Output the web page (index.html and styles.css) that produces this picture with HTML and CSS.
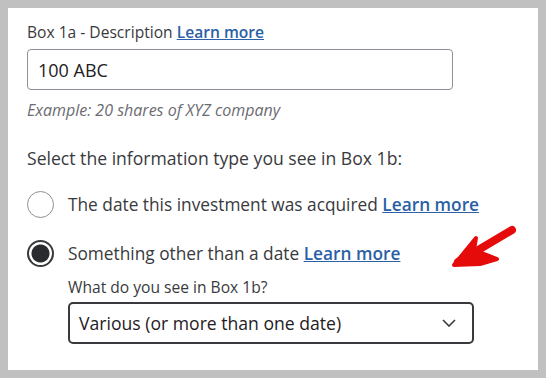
FILE: index.html
```html
<!DOCTYPE html>
<html lang="en">
<head>
  <meta charset="UTF-8">
  <title>Box 1b</title>
  <link rel="stylesheet" href="styles.css">
</head>
<body>

<div class="panel">
  <div class="label">Box 1a - Description <a href="#" class="link">Learn more</a></div>
  <div class="input">100 ABC</div>
  <div class="hint">Example: 20 shares of XYZ company</div>

  <div class="question">Select the information type you see in Box 1b:</div>

  <div class="option">
    <span class="radio"></span>
    <span>The date this investment was acquired <a href="#" class="link">Learn more</a></span>
  </div>
  <div class="option second">
    <span class="radio checked"></span>
    <span>Something other than a date <a href="#" class="link">Learn more</a></span>
  </div>

  <div class="sub">
    <div class="label">What do you see in Box 1b?</div>
    <div class="select">
      <span>Various (or more than one date)</span>
      <svg width="14" height="8" viewBox="0 0 14 8"><path d="M1 1 L7 7 L13 1" fill="none" stroke="#393a3d" stroke-width="1.6"/></svg>
    </div>
  </div>

  <svg class="arrow" width="80" height="50" viewBox="0 0 80 50">
    <path d="M68 6 L14 38" stroke="#e60b0b" stroke-width="8" stroke-linecap="round" fill="none"/>
    <path d="M10 41 L32 14 L30 26 L53 35 L36 40 Z" fill="#e60b0b" stroke="#e60b0b" stroke-width="4" stroke-linejoin="round"/>
  </svg>
</div>

</body>
</html>
```

FILE: styles.css
```css
* {
  margin: 0;
  padding: 0;
  box-sizing: border-box;
}

body {
  background-color: #c0c0c0;
  padding: 8px;
  font-family: "Open Sans", "Noto Sans", sans-serif;
  color: #393a3d;
}

.panel {
  position: relative;
  background-color: white;
  height: 362px;
  padding: 14px 19px 0 19px;
}

.label {
  font-size: 15.6px;
  line-height: 20px;
  margin-bottom: 7px;
}

.link {
  color: #2b5fa6;
  font-weight: 600;
  text-decoration: underline;
}

.input {
  width: 426px;
  height: 41px;
  border: 1px solid #8d9096;
  border-radius: 4px;
  font-size: 18px;
  padding-left: 10px;
  display: flex;
  align-items: center;
  color: #1f2024;
}

.hint {
  font-size: 16px;
  font-style: italic;
  color: #6b6c72;
  line-height: 20px;
  margin-top: 10px;
}

.question {
  font-size: 17.6px;
  line-height: 24px;
  margin-top: 26px;
}

.option {
  display: flex;
  align-items: center;
  gap: 14px;
  font-size: 17.3px;
  height: 28px;
  margin-top: 20px;
}

.option.second {
  margin-top: 21px;
}

.radio {
  width: 27px;
  height: 27px;
  border: 1px solid #8d9096;
  border-radius: 50%;
  flex-shrink: 0;
}

.radio.checked {
  border: 2px solid #393a3d;
  background: radial-gradient(circle, #2a2b2e 0, #2a2b2e 8.5px, white 9.5px);
}

.sub {
  padding-left: 41px;
  margin-top: 10px;
}

.sub .label {
  margin-bottom: 5px;
}

.select {
  width: 406px;
  height: 42px;
  border: 2px solid #393a3d;
  border-radius: 5px;
  display: flex;
  align-items: center;
  justify-content: space-between;
  padding: 0 16px 0 9px;
  font-size: 17.6px;
  color: #1f2024;
}

.arrow {
  position: absolute;
  left: 436px;
  top: 216px;
}
```
